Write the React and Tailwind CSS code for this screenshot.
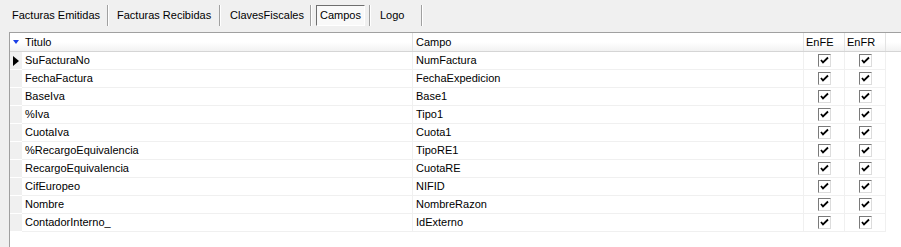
import React from "react";

const rows = [
    ["SuFacturaNo", "NumFactura"],
    ["FechaFactura", "FechaExpedicion"],
    ["BaseIva", "Base1"],
    ["%Iva", "Tipo1"],
    ["CuotaIva", "Cuota1"],
    ["%RecargoEquivalencia", "TipoRE1"],
    ["RecargoEquivalencia", "CuotaRE"],
    ["CifEuropeo", "NIFID"],
    ["Nombre", "NombreRazon"],
    ["ContadorInterno_", "IdExterno"],
];

function Separator() {
    return <div className="w-[2px] h-[21px] shrink-0 border-l border-[#a0a0a0] border-r border-r-white"></div>;
}

function Check() {
    return (
        <div className="size-[13px] bg-white border border-t-[#7a7a7a] border-l-[#7a7a7a] border-b-[#dcdcdc] border-r-[#dcdcdc] flex items-center justify-center">
            <svg width="9" height="9" viewBox="0 0 9 9">
                <path d="M1 4 L3 6.5 L8 1.5" stroke="#000" strokeWidth="1.8" fill="none" />
            </svg>
        </div>
    );
}

export default function App() {
    return (
        <div className="w-[901px] h-[247px] bg-[#f0f0f0] flex flex-col overflow-hidden text-[11px] text-black" style={{ fontFamily: '"Liberation Sans", Arial, sans-serif' }}>
            {/* tab strip */}
            <div className="h-[32px] flex items-start pt-[5px] pl-[12px] whitespace-nowrap">
                <div className="h-[21px] w-[95px] flex items-center">Facturas Emitidas</div>
                <Separator />
                <div className="h-[21px] w-[110px] flex items-center pl-[8px]">Facturas Recibidas</div>
                <Separator />
                <div className="h-[21px] w-[89px] flex items-center pl-[9px]">ClavesFiscales</div>
                <Separator />
                <div className="ml-[4px] h-[21px] w-[49px] flex items-center justify-center border border-t-[#6e6e6e] border-l-[#6e6e6e] border-b-white border-r-white bg-[#f9f9f9] mr-[4px]">Campos</div>
                <Separator />
                <div className="h-[21px] w-[50px] flex items-center pl-[9px]">Logo</div>
                <Separator />
            </div>

            {/* grid */}
            <div className="ml-[9px] flex-1 bg-white border-l border-t border-[#a0a0a0]">
                <div className="grid grid-cols-[12px_391px_391px_41px_41px] h-[19px] bg-gradient-to-b from-white from-50% to-[#f2f2f2] border-b border-[#d5d5d5]">
                    <div className="flex items-center justify-center">
                        <svg width="6" height="4" viewBox="0 0 6 4"><path d="M0 0 H6 L3 4 Z" fill="#1a3fe6" /></svg>
                    </div>
                    <div className="pl-[3px] flex items-center border-r border-[#e3e3e3]">Titulo</div>
                    <div className="pl-[3px] flex items-center border-r border-[#e3e3e3]">Campo</div>
                    <div className="pl-[2px] flex items-center border-r border-[#e3e3e3]">EnFE</div>
                    <div className="pl-[2px] flex items-center border-r border-[#e3e3e3]">EnFR</div>
                </div>
                {rows.map((r, i) => (
                    <div key={i} className="grid grid-cols-[12px_391px_391px_41px_41px] h-[18px]">
                        <div className="bg-[#f0f0f0] border-b border-white flex items-center justify-center">
                            {i === 0 && (
                                <svg width="6" height="10" viewBox="0 0 6 10"><path d="M0 0 L6 5 L0 10 Z" fill="#000" /></svg>
                            )}
                        </div>
                        <div className="pl-[3px] flex items-center border-r border-b border-[#f0f0f0]">{r[0]}</div>
                        <div className="pl-[3px] flex items-center border-r border-b border-[#f0f0f0]">{r[1]}</div>
                        <div className="flex items-center justify-center border-r border-b border-[#f0f0f0]"><Check /></div>
                        <div className="flex items-center justify-center border-r border-b border-[#f0f0f0]"><Check /></div>
                    </div>
                ))}
            </div>
        </div>
    );
}
